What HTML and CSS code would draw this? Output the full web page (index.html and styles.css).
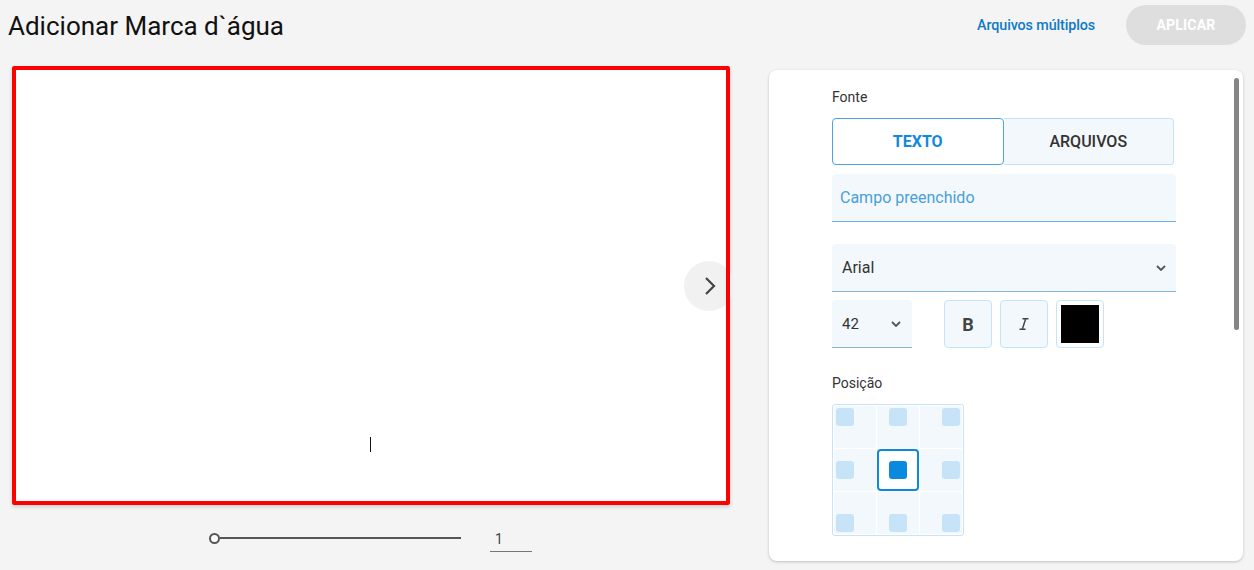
FILE: index.html
```html
<!DOCTYPE html>
<html lang="pt">
<head>
<meta charset="utf-8">
<title>Adicionar Marca d`água</title>
<link rel="stylesheet" href="styles.css">
</head>
<body>
<header class="topbar">
  <h1 class="title">Adicionar Marca d`água</h1>
  <div class="actions">
    <a class="link" href="#">Arquivos múltiplos</a>
    <button class="apply" disabled>APLICAR</button>
  </div>
</header>
<main class="main">
  <section class="preview">
    <div class="canvas">
      <span class="caret"></span>
      <button class="next" aria-label="Próximo">
        <svg width="14" height="20" viewBox="0 0 14 20"><path d="M3 2 L11 10 L3 18" fill="none" stroke="#444" stroke-width="2.2"/></svg>
      </button>
    </div>
    <div class="pager">
      <div class="slider"><span class="knob"></span><span class="track"></span></div>
      <div class="page-num">1</div>
    </div>
  </section>
  <aside class="panel">
    <div class="panel-body">
      <div class="label">Fonte</div>
      <div class="toggle">
        <button class="tab active">TEXTO</button>
        <button class="tab">ARQUIVOS</button>
      </div>
      <div class="field text-field">Campo preenchido</div>
      <div class="field select">
        <span>Arial</span>
        <svg class="chev" width="10" height="6" viewBox="0 0 10 6"><path d="M1 1 L5 5 L9 1" fill="none" stroke="#555" stroke-width="1.8"/></svg>
      </div>
      <div class="style-row">
        <div class="field select size">
          <span>42</span>
          <svg class="chev" width="10" height="6" viewBox="0 0 10 6"><path d="M1 1 L5 5 L9 1" fill="none" stroke="#555" stroke-width="1.8"/></svg>
        </div>
        <button class="sq-btn bold">B</button>
        <button class="sq-btn italic" aria-label="Itálico">
          <svg width="18" height="18" viewBox="0 0 24 24"><path d="M10 4v2h2.9l-3.8 12H6v2h8v-2h-2.9l3.8-12H18V4z" fill="#444"/></svg>
        </button>
        <button class="sq-btn color"><span class="swatch"></span></button>
      </div>
      <div class="label pos-label">Posição</div>
      <div class="pos-grid">
        <div class="cell tl"><span class="dot"></span></div>
        <div class="cell tc"><span class="dot"></span></div>
        <div class="cell tr"><span class="dot"></span></div>
        <div class="cell ml"><span class="dot"></span></div>
        <div class="cell mc selected"><span class="dot"></span></div>
        <div class="cell mr"><span class="dot"></span></div>
        <div class="cell bl"><span class="dot"></span></div>
        <div class="cell bc"><span class="dot"></span></div>
        <div class="cell br"><span class="dot"></span></div>
      </div>
    </div>
    <div class="scrollbar"></div>
  </aside>
</main>
</body>
</html>
```

FILE: styles.css
```css
* { box-sizing: border-box; }
html, body { margin: 0; padding: 0; }
body {
  background: #f4f4f4;
  font-family: Roboto, "Liberation Sans", Arial, sans-serif;
  color: #222;
  width: 1254px;
  height: 570px;
  overflow: hidden;
}
.topbar {
  display: flex;
  justify-content: space-between;
  align-items: center;
  height: 52px;
  padding: 0 8px 0 8px;
}
.title {
  margin: 0;
  font-size: 26px;
  font-weight: 400;
  color: #111;
  line-height: 30px;
  margin-top: -1px;
}
.actions {
  display: flex;
  align-items: center;
  gap: 31px;
  margin-top: -2px;
}
.link {
  color: #0f7ac6;
  font-size: 14.3px;
  font-weight: 500;
  text-decoration: none;
  letter-spacing: -0.1px;
}
.apply {
  width: 120px;
  height: 40px;
  border: none;
  border-radius: 20px;
  background: #dedede;
  color: #fff;
  font-family: inherit;
  font-size: 14px;
  font-weight: 700;
  letter-spacing: 0.2px;
}
.main {
  display: flex;
  gap: 39px;
  padding: 14px 0 0 12px;
}
.preview {
  width: 718px;
  display: flex;
  flex-direction: column;
}
.canvas {
  position: relative;
  width: 718px;
  height: 439px;
  background: #fff;
  box-shadow: 0 2px 4px rgba(0,0,0,0.15);
}
.canvas::after {
  content: "";
  position: absolute;
  inset: 0;
  border: 4px solid #ff0000;
  border-radius: 2px;
  pointer-events: none;
  z-index: 2;
}
.caret {
  position: absolute;
  left: 358px;
  top: 371px;
  width: 1px;
  height: 15px;
  background: #111;
}
.next {
  position: absolute;
  z-index: 1;
  left: 672px;
  top: 195px;
  width: 50px;
  height: 50px;
  border-radius: 50%;
  border: none;
  background: #f1f1f1;
  padding: 0;
  display: flex;
  align-items: center;
  justify-content: center;
}
.next svg { margin-left: 2px; }
.pager {
  display: flex;
  align-items: center;
  margin-top: 19px;
  padding-left: 197px;
}
.slider {
  display: flex;
  align-items: center;
  width: 252px;
}
.knob {
  width: 11px;
  height: 11px;
  border: 2px solid #555;
  border-radius: 50%;
  background: #fff;
  flex: none;
}
.track {
  flex: 1;
  height: 2px;
  background: #555;
}
.page-num {
  margin-left: 29px;
  width: 42px;
  border-bottom: 1px solid #777;
  font-size: 14px;
  color: #444;
  padding: 0 0 3px 5px;
  line-height: 18px;
  margin-top: 6px;
}
.panel {
  position: relative;
  width: 474px;
  height: 491px;
  margin-top: 4px;
  background: #fff;
  border-radius: 8px;
  box-shadow: 0 1px 3px rgba(0,0,0,0.22);
  overflow: hidden;
}
.panel-body {
  padding: 19px 0 0 63px;
  width: 407px;
}
.scrollbar {
  position: absolute;
  right: 4px;
  top: 8px;
  width: 5px;
  height: 252px;
  border-radius: 3px;
  background: #858585;
}
.label {
  font-size: 14px;
  font-weight: 400;
  color: #333;
  line-height: 16px;
}
.toggle {
  display: flex;
  margin-top: 13px;
  width: 342px;
  height: 47px;
}
.tab {
  flex: 1;
  font-family: inherit;
  font-size: 16px;
  font-weight: 500;
  color: #333;
  background: #f3f8fc;
  border: 1px solid #c8e3f7;
  border-left: none;
  border-radius: 0 4px 4px 0;
}
.tab.active {
  background: #fff;
  color: #1289de;
  font-weight: 700;
  border: 1.5px solid #4ea3e3;
  border-radius: 4px;
}
.field {
  background: #f3f8fc;
  border-bottom: 1px solid #71b0dd;
  border-radius: 4px 4px 0 0;
  height: 48px;
  display: flex;
  align-items: center;
  font-size: 16px;
  width: 344px;
}
.text-field {
  margin-top: 9px;
  padding-left: 8px;
  color: #4a9fd8;
  border-bottom-color: #6db2e4;
}
.select {
  margin-top: 22px;
  padding: 0 10px 0 10px;
  justify-content: space-between;
  color: #333;
  border-bottom-color: #82b6dc;
}
.chev { margin-top: 1px; }
.style-row {
  display: flex;
  align-items: center;
  margin-top: 8px;
  gap: 8px;
}
.select.size {
  margin-top: 0;
  width: 80px;
  margin-right: 24px;
  padding-right: 11px;
  font-size: 15px;
}
.sq-btn {
  width: 48px;
  height: 48px;
  background: #f3f8fc;
  border: 1px solid #c8e3f7;
  border-radius: 4px;
  font-family: inherit;
  color: #444;
  padding: 0;
  display: flex;
  align-items: center;
  justify-content: center;
}
.bold { font-size: 18px; font-weight: 700; }
.color { background: #fff; }
.swatch {
  width: 38px;
  height: 38px;
  background: #000;
  display: block;
}
.pos-label { margin-top: 27px; }
.pos-grid {
  margin-top: 13px;
  width: 132px;
  height: 132px;
  display: grid;
  grid-template-columns: repeat(3, 1fr);
  grid-template-rows: repeat(3, 1fr);
  gap: 1px;
  padding: 1px;
  background: #fff;
  border: 1px solid #c8e3f7;
  border-radius: 3px;
}
.cell {
  background: #f3f8fc;
  border-radius: 2px;
  display: flex;
  padding: 2px;
}
.dot {
  width: 18px;
  height: 18px;
  border-radius: 3px;
  background: #c6e3f7;
}
.tl { justify-content: flex-start; align-items: flex-start; }
.tc { justify-content: center; align-items: flex-start; }
.tr { justify-content: flex-end; align-items: flex-start; }
.ml { justify-content: flex-start; align-items: center; }
.mc { justify-content: center; align-items: center; }
.mr { justify-content: flex-end; align-items: center; }
.bl { justify-content: flex-start; align-items: flex-end; }
.bc { justify-content: center; align-items: flex-end; }
.br { justify-content: flex-end; align-items: flex-end; }
.cell.selected {
  background: #fff;
  border: 2px solid #0b89de;
  border-radius: 4px;
}
.cell.selected .dot { background: #0b89de; }
```
